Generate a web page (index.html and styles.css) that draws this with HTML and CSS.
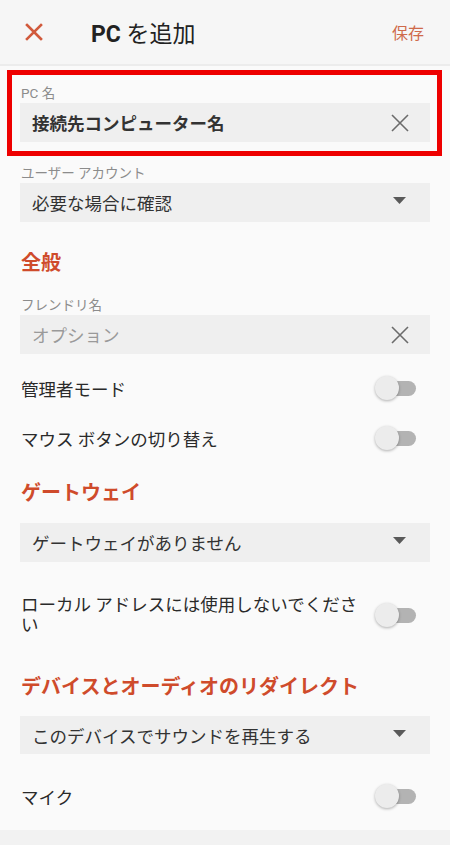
FILE: index.html
```html
<!DOCTYPE html>
<html lang="ja">
<head>
<meta charset="utf-8">
<title>PC を追加</title>
<link rel="stylesheet" href="styles.css">
</head>
<body>
<header class="appbar">
  <button class="icon-btn close" aria-label="閉じる">
    <svg width="18" height="18" viewBox="0 0 18 18"><path d="M2 2 L16 16 M16 2 L2 16" stroke="#d15a3c" stroke-width="2.6" stroke-linecap="square"/></svg>
  </button>
  <h1 class="title"><span class="title-latin">PC</span> を追加</h1>
  <span class="save">保存</span>
</header>

<main class="content">
  <section class="highlight">
    <div class="label">PC 名</div>
    <div class="field">
      <span class="field-text strong">接続先コンピューター名</span>
      <svg class="clear" width="18" height="18" viewBox="0 0 18 18"><path d="M1 1 L17 17 M17 1 L1 17" stroke="#6b6b6b" stroke-width="1.6"/></svg>
    </div>
  </section>

  <section class="group account">
    <div class="label">ユーザー アカウント</div>
    <div class="field">
      <span class="field-text">必要な場合に確認</span>
      <svg class="caret" width="13" height="7" viewBox="0 0 13 7"><polygon points="0,0 13,0 6.5,7" fill="#5a5a5a"/></svg>
    </div>
  </section>

  <h2 class="heading h-general">全般</h2>

  <section class="group">
    <div class="label">フレンドリ名</div>
    <div class="field">
      <span class="field-text placeholder">オプション</span>
      <svg class="clear" width="18" height="18" viewBox="0 0 18 18"><path d="M1 1 L17 17 M17 1 L1 17" stroke="#6b6b6b" stroke-width="1.6"/></svg>
    </div>
  </section>

  <div class="row first-row">
    <span class="row-text">管理者モード</span>
    <span class="toggle"><span class="track"></span><span class="thumb"></span></span>
  </div>
  <div class="row">
    <span class="row-text">マウス ボタンの切り替え</span>
    <span class="toggle"><span class="track"></span><span class="thumb"></span></span>
  </div>

  <h2 class="heading h-gateway">ゲートウェイ</h2>

  <section class="group">
    <div class="field">
      <span class="field-text">ゲートウェイがありません</span>
      <svg class="caret" width="13" height="7" viewBox="0 0 13 7"><polygon points="0,0 13,0 6.5,7" fill="#5a5a5a"/></svg>
    </div>
  </section>

  <div class="row multi">
    <span class="row-text">ローカル アドレスには使用しないでください</span>
    <span class="toggle"><span class="track"></span><span class="thumb"></span></span>
  </div>

  <h2 class="heading h-device">デバイスとオーディオのリダイレクト</h2>

  <section class="group">
    <div class="field short">
      <span class="field-text">このデバイスでサウンドを再生する</span>
      <svg class="caret" width="13" height="7" viewBox="0 0 13 7"><polygon points="0,0 13,0 6.5,7" fill="#5a5a5a"/></svg>
    </div>
  </section>

  <div class="row mic-row">
    <span class="row-text">マイク</span>
    <span class="toggle"><span class="track"></span><span class="thumb"></span></span>
  </div>
</main>
<div class="bottom-strip"></div>
</body>
</html>
```

FILE: styles.css
```css
* { box-sizing: border-box; }

html, body {
  margin: 0;
  padding: 0;
}

body {
  background: #fafafa;
  font-family: Roboto, "Noto Sans CJK JP", "Noto Sans", sans-serif;
  color: #2e2e2e;
  width: 450px;
  height: 845px;
  overflow: hidden;
  display: flex;
  flex-direction: column;
}

.appbar {
  height: 66px;
  background: #f6f6f6;
  border-bottom: 2px solid #ececec;
  display: flex;
  align-items: center;
  padding: 0 26px 0 25px;
  flex: none;
}

.icon-btn {
  border: 0;
  background: none;
  padding: 0;
  width: 18px;
  height: 18px;
  display: flex;
}

.title {
  margin: 0 0 0 48px;
  font-size: 23px;
  font-weight: 400;
  color: #222;
  flex: 1;
}

.title-latin {
  font-weight: 700;
}

.save {
  font-size: 16px;
  color: #cf6a4a;
}

.content {
  flex: 1;
  display: flex;
  flex-direction: column;
}

.highlight {
  margin: 4px 8px 0 7px;
  border: 5px solid #ee0000;
  padding: 9px 7px 9px 8px;
}

.group {
  padding: 0 20px;
}

.account {
  margin-top: 8px;
}

.label {
  font-size: 13.5px;
  line-height: 18px;
  color: #8c8c8c;
  margin: 0 0 1px 1px;
}

.field {
  height: 39px;
  background: #efefef;
  display: flex;
  align-items: center;
  justify-content: space-between;
  padding: 0 21px 0 12px;
}

.field.short {
  height: 38px;
}

.field-text {
  font-size: 17.5px;
  color: #333;
}

.field-text.strong {
  font-weight: 700;
  color: #333;
}

.field-text.placeholder {
  color: #9a9a9a;
}

.caret {
  margin-right: 3px;
  margin-top: -4px;
}

.heading {
  margin: 0;
  padding: 0 21px;
  font-size: 20px;
  line-height: 26px;
  font-weight: 700;
  color: #cf4b2b;
}

.h-general {
  margin-top: 28px;
  margin-bottom: 20px;
}

.h-gateway {
  margin-top: 17px;
  margin-bottom: 17px;
}

.h-device {
  margin-top: 39px;
  margin-bottom: 16px;
}

.row {
  height: 50px;
  display: flex;
  align-items: center;
  justify-content: space-between;
  padding: 0 34px 0 21px;
  gap: 8px;
  flex: none;
}

.first-row {
  margin-top: 9px;
}

.row.multi {
  height: auto;
  margin-top: 33px;
}

.row.multi .row-text {
  line-height: 20px;
}

.mic-row {
  margin-top: 17px;
}

.row-text {
  font-size: 17.5px;
  color: #2a2a2a;
  flex: 1;
}

.toggle {
  position: relative;
  width: 41px;
  height: 25px;
  flex: none;
}

.track {
  position: absolute;
  left: 4px;
  right: 0;
  top: 5px;
  height: 15px;
  border-radius: 8px;
  background: #b3b3b3;
}

.thumb {
  position: absolute;
  left: 0;
  top: 0;
  width: 24px;
  height: 24px;
  border-radius: 50%;
  background: #ececec;
  box-shadow: 0 1px 3px rgba(0, 0, 0, 0.3);
}

.bottom-strip {
  height: 15px;
  background: #f2f2f2;
  flex: none;
}
```
